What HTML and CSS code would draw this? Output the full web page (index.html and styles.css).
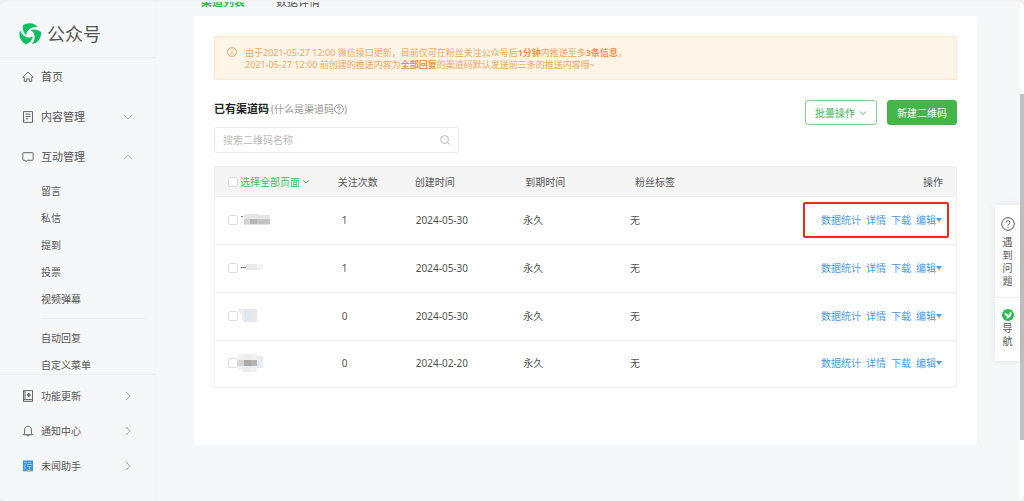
FILE: index.html
```html
<!DOCTYPE html>
<html lang="zh-CN">
<head>
<meta charset="utf-8">
<title>公众号</title>
<link rel="stylesheet" href="styles.css">
</head>
<body>
<div class="app">
  <aside class="sidebar">
    <div class="brand">
      <svg class="brand-logo" viewBox="0 0 24 24" aria-hidden="true">
        <g fill="#07c160">
          <path id="blade" d="M5 3.300A11 11 0 0 1 20 5.200C16 4.600 12.500 5.600 10.300 8.100C8.800 9.800 8.300 11.300 8.300 13.200 5.500 10.800 4.200 7.200 5 3.300z"/>
          <use href="#blade" transform="rotate(120 12 12)"/>
          <use href="#blade" transform="rotate(240 12 12)"/>
        </g>
      </svg>
      <span>公众号</span>
    </div>
    <nav class="menu">
      <a class="item" href="#"><svg class="icon" viewBox="0 0 12 12"><path d="M.8 6.300 6 1l5.200 5.300H9.700v4.200H7.300V7.900H4.700v2.600H2.300V6.300z"/></svg><span>首页</span></a>
      <a class="item" href="#"><svg class="icon" viewBox="0 0 12 12"><path d="M1.500.6h9v10.800h-9zM3.700 3.200h4.800M3.700 5.500h4.800M3.700 7.800h2.500M1.500 9.500h1"/></svg><span>内容管理</span><svg class="arrow" viewBox="0 0 10 10"><path d="m1 3 4 4 4-4"/></svg></a>
      <a class="item" href="#"><svg class="icon" viewBox="0 0 12 12"><path d="M1.600 1.700h8.800q.8 0 .8.8v6q0 .8-.8.8H5.400L4 10.600l-.6-1.300H1.600q-.8 0-.8-.8v-6q0-.8.8-.8z"/></svg><span>互动管理</span><svg class="arrow" viewBox="0 0 10 10"><path d="m1 7 4-4 4 4"/></svg></a>
      <div class="submenu">
        <a href="#">留言</a>
        <a href="#">私信</a>
        <a href="#">提到</a>
        <a href="#">投票</a>
        <a href="#">视频弹幕</a>
        <hr>
        <a href="#">自动回复</a>
        <a href="#">自定义菜单</a>
      </div>
    </nav>
    <nav class="menu-foot">
      <a class="item" href="#"><svg class="icon" viewBox="0 0 12 12"><path d="M1.500.6h9v10.800h-9zM3 .6v9M1.500 9.600h9"/><path d="M6.800 3v4M4.800 5h4" stroke-width="1.400"/></svg><span>功能更新</span><svg class="arrow" viewBox="0 0 10 10"><path d="m3 1 4 4-4 4"/></svg></a>
      <a class="item" href="#"><svg class="icon" viewBox="0 0 12 12"><path d="M.8 9.700h10.400M2 9.700l.6-1.400V5C2.600 2.600 4 1.200 6 1.200S9.400 2.600 9.400 5v3.300l.6 1.400M4.700 9.900c.2 1.500 2.400 1.500 2.600 0"/></svg><span>通知中心</span><svg class="arrow" viewBox="0 0 10 10"><path d="m3 1 4 4-4 4"/></svg></a>
      <a class="item" href="#"><svg class="icon helper" viewBox="0 0 12 12"><path fill="#3a8ff2" d="M1 .5h10v10.800H1z"/><path stroke="#b9dcff" stroke-width=".7" d="M2 2.500h3M3 4v5M5 4.500h5M6 2.500h3.500M5 6.500h4.500M7.500 7v2M1.500 10 3 8.500"/><path fill="#f5b54a" d="m4.500 9 2 1.200 2-1.200-.4 3H5z"/></svg><span>未闻助手</span><svg class="arrow" viewBox="0 0 10 10"><path d="m3 1 4 4-4 4"/></svg></a>
    </nav>
  </aside>

  <main class="main">
    <nav class="tabs"><a class="active" href="#">渠道列表</a><a href="#">数据详情</a></nav>
    <section class="card">
      <div class="notice">
        <svg class="notice-icon" viewBox="0 0 10 10"><circle cx="5" cy="5" r="4.400"/><path d="M5 4.300v3.200M5 2.500v.9"/></svg>
        <p>由于2021-05-27 12:00 微信接口更新，目前仅可在粉丝关注公众号后<b>1分钟</b>内推送至多<b>3条信息</b>，<br>2021-05-27 12:00 前创建的推送内容为<b>全部回复</b>的渠道码默认发送前三条的推送内容哦~</p>
      </div>
      <div class="toolbar">
        <div>
          <div class="heading">
            <h1>已有渠道码</h1>
            <a class="hint" href="#">(什么是渠道码<svg viewBox="0 0 10 10"><circle cx="5" cy="5" r="4.400"/><path d="M3.700 4c0-1.700 2.700-1.700 2.700 0C6.400 5 5 5 5 6.200M5 7v.8"/></svg>)</a>
          </div>
          <div class="search">
            <input type="text" placeholder="搜索二维码名称" aria-label="搜索二维码名称">
            <svg viewBox="0 0 10 10"><circle cx="4.600" cy="4.600" r="4"/><path d="m7.600 7.600 2 2"/></svg>
          </div>
        </div>
        <div class="buttons">
          <button class="btn outline" type="button">批量操作<svg viewBox="0 0 8 8"><path d="m1 2.500 3 3 3-3"/></svg></button>
          <button class="btn solid" type="button">新建二维码</button>
        </div>
      </div>
      <table class="codes">
        <colgroup><col class="c-name"><col class="c-count"><col class="c-created"><col class="c-expire"><col class="c-tag"><col></colgroup>
        <thead>
          <tr>
            <th><label class="pick all"><input type="checkbox">选择全部页面<svg viewBox="0 0 8 8"><path d="m1.500 2.500 2.500 2.500 2.500-2.500"/></svg></label></th>
            <th>关注次数</th><th>创建时间</th><th class="expire">到期时间</th><th class="tag">粉丝标签</th><th class="ops">操作</th>
          </tr>
        </thead>
        <tbody>
          <tr>
            <td><label class="pick"><input type="checkbox" aria-label="选择第一项"><svg class="mosaic" viewBox="0 0 40 20"><path fill="#777" d="M3 6h2v1H3z"/><path fill="#e6e6e6" d="M7 4h14v1h11v5H6V5h1z"/><path fill="#d4d4d4" d="M6 9h6v6H6z"/><path fill="#b5b5b5" d="M12 9h7v6h-7z"/><path fill="#c4c4c4" d="M19 9h13v6H19z"/><path fill="#e2e2e2" d="M6 14h26v1H6z"/></svg></label></td>
            <td class="count">1</td><td class="date">2024-05-30</td><td>永久</td><td>无</td>
            <td><div class="actions marked"><a href="#">数据统计</a><a href="#">详情</a><a href="#">下载</a><a class="more" href="#">编辑</a></div></td>
          </tr>
          <tr>
            <td><label class="pick"><input type="checkbox" aria-label="选择第二项"><svg class="mosaic" viewBox="0 0 40 20"><path fill="#777" d="M3 9h5v1H3z"/><path fill="#e9e9e9" d="M8 6h11v6H8z"/><path fill="#f3f5f5" d="M19 6h6v6h-6z"/></svg></label></td>
            <td class="count">1</td><td class="date">2024-05-30</td><td>永久</td><td>无</td>
            <td><div class="actions"><a href="#">数据统计</a><a href="#">详情</a><a href="#">下载</a><a class="more" href="#">编辑</a></div></td>
          </tr>
          <tr>
            <td><label class="pick"><input type="checkbox" aria-label="选择第三项"><svg class="mosaic" viewBox="0 0 40 20"><path fill="#f1ebe8" d="M0 3h6v12H4V9L0 5z"/><path fill="#e2e6ed" d="M6 3h7v13H6z"/><path fill="#e7e7e8" d="M13 3h6v13h-6z"/></svg></label></td>
            <td class="count">0</td><td class="date">2024-05-30</td><td>永久</td><td>无</td>
            <td><div class="actions"><a href="#">数据统计</a><a href="#">详情</a><a href="#">下载</a><a class="more" href="#">编辑</a></div></td>
          </tr>
          <tr>
            <td><label class="pick"><input type="checkbox" aria-label="选择第四项"><svg class="mosaic" viewBox="0 0 40 20"><path fill="#f1f1f1" d="M0 1h19v18H4v-2H0z"/><path fill="#ececec" d="M6 1h7v18H6z"/><path fill="#d6d6d6" d="M0 7h6v6H0z"/><path fill="#a9a9a9" d="M6 7h7v6H6z"/><path fill="#b9b5b2" d="M13 7h6v6h-6z"/><path fill="#e6ecf3" d="M19 3h6v12h-6z"/></svg></label></td>
            <td class="count">0</td><td class="date">2024-02-20</td><td>永久</td><td>无</td>
            <td><div class="actions"><a href="#">数据统计</a><a href="#">详情</a><a href="#">下载</a><a class="more" href="#">编辑</a></div></td>
          </tr>
        </tbody>
      </table>
    </section>
  </main>
  <div class="scroll"><div class="thumb"></div></div>
  <div class="float">
    <a class="help" href="#"><svg viewBox="0 0 14 14"><circle cx="7" cy="7" r="6.300"/><path d="M5.200 5.600c0-2.400 3.700-2.400 3.700 0C8.900 7 7 7 7 8.600M7 9.800v1"/></svg><span>遇到问题</span></a>
    <a class="guide" href="#"><svg viewBox="0 0 12 12"><circle class="dot" cx="6" cy="6" r="6"/><path d="M3.300 4c.4 1.900 1.600 2.600 3 2.200M8.800 3.400C8.300 6.400 7 8.200 4.700 8.800"/></svg><span>导航</span></a>
  </div>
</div>
</body>
</html>
```

FILE: styles.css
```css
* { box-sizing: border-box; }
body {
  margin: 0;
  background: #f1f1f1;
  color: #555;
  font: 10px/14px "Noto Sans", "Noto Sans CJK SC", sans-serif;
}
a { color: inherit; text-decoration: none; }
svg { flex: none; fill: none; stroke: currentColor; }

.app {
  position: relative;
  display: flex;
  height: 100vh;
  border-top: 2px solid #f1f1f1;
  border-radius: 8px;
  background: #f6f7f9;
  overflow: hidden;
}

/* Sidebar */
.sidebar {
  display: flex;
  flex-direction: column;
  flex: none;
  width: 156px;
  border-right: 1px solid #f3f4f6;
  background: #f5f7f8;
}
.brand {
  display: flex;
  align-items: center;
  gap: 5px;
  height: 56px;
  padding: 8px 0 0 18px;
  border-bottom: 1px solid #eceeef;
  font-size: 18px;
  line-height: 24px;
}
.brand-logo { width: 24px; height: 24px; stroke: none; }
.menu { flex: 1; min-height: 0; overflow: hidden; }
.item {
  display: flex;
  align-items: center;
  height: 40px;
  padding: 0 22px;
  font-size: 11px;
}
.menu .item { padding-bottom: 3px; }
.icon { width: 12px; height: 12px; margin-right: 7px; color: #666; stroke-width: 1; }
.helper { stroke: none; }
.arrow { width: 10px; height: 10px; margin-left: auto; color: #aaa; }
.submenu { padding: 0 10px 0 41px; }
.submenu a { display: block; line-height: 27px; }
.submenu hr { margin: 5px 0 6px; border: 0; border-top: 1px solid #e9ebed; }
.menu-foot { padding: 3px 0 18px; border-top: 1px solid #eceeef; }
.menu-foot .item { height: 35px; font-size: 10px; }

/* Content */
.main { flex: 1; min-width: 0; padding: 0 43px 0 38px; }
.tabs {
  display: flex;
  align-items: flex-end;
  gap: 31px;
  height: 6px;
  margin-bottom: 8px;
  padding-left: 7px;
  font-size: 11px;
  line-height: 12px;
  overflow: hidden;
}
.tabs .active { color: #2dbf4e; font-weight: 700; }
.card { height: 429px; padding: 20px 20px 57px; border-radius: 2px; background: #fff; }
.notice {
  display: flex;
  gap: 8px;
  padding: 10px 12px 8px;
  border: 1px solid #ffe4cb;
  border-radius: 2px;
  background: #fff4e8;
  color: #f3a660;
  font-size: 9px;
  line-height: 12px;
}
.notice p { margin: 0; }
.notice b { color: #ef9340; }
.notice-icon { width: 10px; height: 10px; }
.toolbar { display: flex; justify-content: space-between; align-items: flex-start; padding-top: 20px; }
.heading { display: flex; align-items: center; gap: 2px; }
.heading h1 { margin: 0; color: #222; font-size: 11px; line-height: 17px; }
.hint { display: flex; align-items: center; color: #999; }
.hint svg { width: 10px; height: 10px; }
.search {
  display: flex;
  align-items: center;
  width: 245px;
  height: 26px;
  margin-top: 10px;
  padding: 0 8px;
  border: 1px solid #ebebeb;
  border-radius: 3px;
  color: #bbb;
}
.search input { flex: 1; min-width: 0; padding: 0; border: 0; outline: 0; background: none; color: #555; font: inherit; }
.search input::placeholder { color: #bbb; }
.search svg { width: 10px; height: 10px; }
.buttons { display: flex; gap: 10px; }
.btn {
  display: flex;
  align-items: center;
  justify-content: center;
  gap: 4px;
  height: 25px;
  padding: 0 9px;
  border: 1px solid #44b549;
  border-radius: 3px;
  font: inherit;
}
.btn svg { width: 8px; height: 8px; }
.outline { border-color: #7ed494; background: #fff; color: #44b556; }
.solid { background: #44b549; color: #fff; }

/* Code table */
.codes {
  width: 100%;
  margin-top: 13px;
  border: 1px solid #f0f1f5;
  border-collapse: collapse;
  table-layout: fixed;
}
.c-name { width: 16.6%; }
.c-count { width: 10.4%; }
.c-created { width: 14.6%; }
.c-expire { width: 14.4%; }
.c-tag { width: 14%; }
.codes th { height: 30px; padding: 0; background: #f5f5f5; font-weight: 400; text-align: left; white-space: nowrap; }
.codes td { height: 48px; padding: 0 0 2px; border-top: 1px solid #f0f1f5; }
.codes tr:last-child td { height: 47px; }
.codes th.expire { padding-left: 2px; }
.codes th.tag { padding-left: 5px; }
.codes th.ops { padding-right: 13px; text-align: right; }
.codes td.count { padding-left: 4px; }
.codes td.date { padding-left: 1px; }
.pick { display: flex; align-items: center; padding-left: 13px; }
.pick input {
  appearance: none;
  flex: none;
  width: 10px;
  height: 10px;
  margin: 0;
  border: 1px solid #ddd;
  border-radius: 2px;
  background: #fff;
}
.all { gap: 2px; color: #3fc060; }
.all svg { width: 8px; height: 8px; }
.mosaic { width: 40px; height: 20px; stroke: none; }
.actions {
  display: flex;
  align-items: center;
  justify-content: flex-end;
  gap: 5px;
  width: 146px;
  height: 36px;
  margin: 0 7px 0 auto;
  padding-right: 5px;
  border: 2px solid transparent;
  border-radius: 2px;
  color: #4a9be8;
}
.marked { border-color: #f5271c; }
.more { display: flex; align-items: center; }
.more::after { content: ""; border: 3px solid transparent; border-top: 4px solid #4a9be8; border-bottom: 0; }

/* Scrollbar and side shortcuts */
.scroll { flex: none; width: 4px; padding-top: 92px; background: #fff; }
.thumb { height: 346px; background: #c1c1c1; }
.float {
  position: absolute;
  top: 203px;
  right: 4px;
  width: 25px;
  background: #fff;
  box-shadow: 0 0 8px rgba(0, 0, 0, .08);
}
.float a { display: flex; flex-direction: column; align-items: center; }
.float span { width: 10px; line-height: 13px; }
.help { gap: 5px; padding: 12px 0 9px; border-bottom: 1px solid #eee; }
.help svg { width: 14px; height: 14px; }
.guide { gap: 1px; padding: 11px 0 13px; }
.guide svg { width: 12px; height: 12px; stroke: #fff; stroke-width: 2; }
.guide .dot { fill: #27bd50; stroke: none; }
```
